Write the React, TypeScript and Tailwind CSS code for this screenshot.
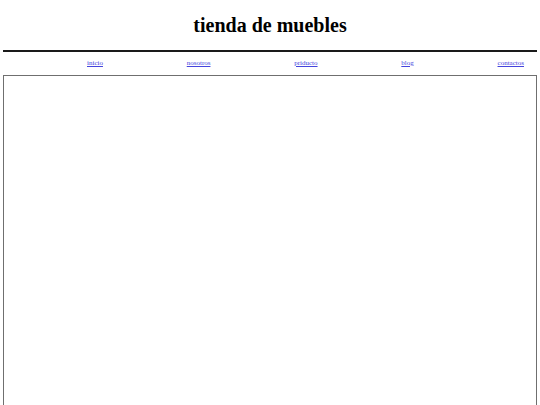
export default function App() {
  const links = ["inicio", "nosotros", "priducto", "blog", "contactos"];
  return (
    <div
      className="w-[540px] h-[405px] overflow-hidden bg-white text-black"
      style={{ fontFamily: '"Liberation Serif", "Times New Roman", serif' }}
    >
      <header className="pt-[13px] px-[3px]">
        <h1 className="text-center text-[20px] leading-[24px] font-bold">tienda de muebles</h1>
        <div className="mt-[13px] h-[2px] bg-[#1a1a1a]" />
        <nav className="flex justify-between pl-[84px] pr-[13px] h-[23px] pb-[2px] items-center">
          {links.map((l) => (
            <a key={l} href="#" className="text-[7px] leading-[8px] text-[#4444dd] underline">
              {l}
            </a>
          ))}
        </nav>
        <main className="h-[340px] border-[1.5px] border-[#6f6f6f] border-b-0" />
      </header>
    </div>
  );
}
